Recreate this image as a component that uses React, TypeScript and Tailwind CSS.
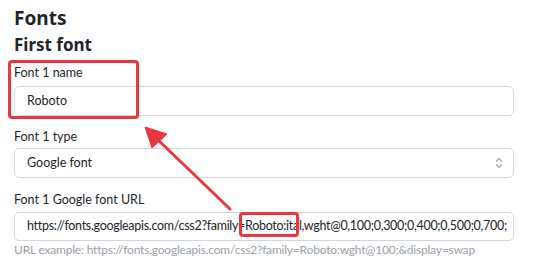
export default function App() {
  return (
    <div className="relative w-[560px] h-[270px] overflow-hidden bg-white text-[#212529] font-['Lato',sans-serif]">
      <div className="w-[500px] ml-[14px] pt-[6px]">
        <h2 className="font-['Noto_Sans',sans-serif] text-[19px] font-bold leading-[24px]">Fonts</h2>
        <h3 className="mt-[4px] font-['Noto_Sans',sans-serif] text-[17px] font-bold leading-[22px]">First font</h3>

        <div className="mt-[8px]">
          <label className="block text-[12.5px] leading-[18px]">Font 1 name</label>
          <div className="mt-[4px] h-[30px] flex items-center rounded-[5px] border border-[#d3d6db] px-[12px] text-[12.5px]">
            Roboto
          </div>
        </div>

        <div className="mt-[12px]">
          <label className="block text-[12.5px] leading-[18px]">Font 1 type</label>
          <div className="mt-[2px] h-[30px] flex items-center justify-between rounded-[5px] border border-[#d3d6db] pl-[12px] pr-[10px] text-[12.5px]">
            <span>Google font</span>
            <svg width="8" height="12" viewBox="0 0 8 12" fill="none" stroke="#9aa0a6" strokeWidth="1.1">
              <path d="M1 4.5 L4 1.5 L7 4.5" />
              <path d="M1 7.5 L4 10.5 L7 7.5" />
            </svg>
          </div>
        </div>

        <div className="mt-[13px]">
          <label className="block text-[12.5px] leading-[18px]">Font 1 Google font URL</label>
          <div className="mt-[3px] h-[29px] flex items-center overflow-hidden whitespace-nowrap rounded-[5px] border border-[#d3d6db] px-[12px] text-[12.5px] tracking-[-0.3px]">
            https://fonts.googleapis.com/css2?family=Roboto:ital,wght@0,100;0,300;0,400;0,500;0,700;
          </div>
          <p className="mt-[1px] whitespace-nowrap text-[12px] leading-[16px] tracking-[-0.2px] text-[#9aa1a9]">
            URL example: https://fonts.googleapis.com/css2?family=Roboto:wght@100;&amp;display=swap
          </p>
        </div>
      </div>

      {/* annotations */}
      <div className="absolute left-[8px] top-[60px] w-[131px] h-[59px] rounded-[4px] border-[3px] border-[#e8373d]" />
      <div className="absolute left-[239px] top-[212px] w-[60px] h-[25px] rounded-[4px] border-[3px] border-[#e8373d]" />
      <svg className="absolute left-0 top-0" width="560" height="270" viewBox="0 0 560 270">
        <line x1="230" y1="209" x2="156" y2="138" stroke="#e8373d" strokeWidth="3" strokeLinecap="round" />
        <polygon points="145,127 152,148 167,134" fill="#e8373d" stroke="#e8373d" strokeWidth="1" strokeLinejoin="round" />
      </svg>
    </div>
  );
}
